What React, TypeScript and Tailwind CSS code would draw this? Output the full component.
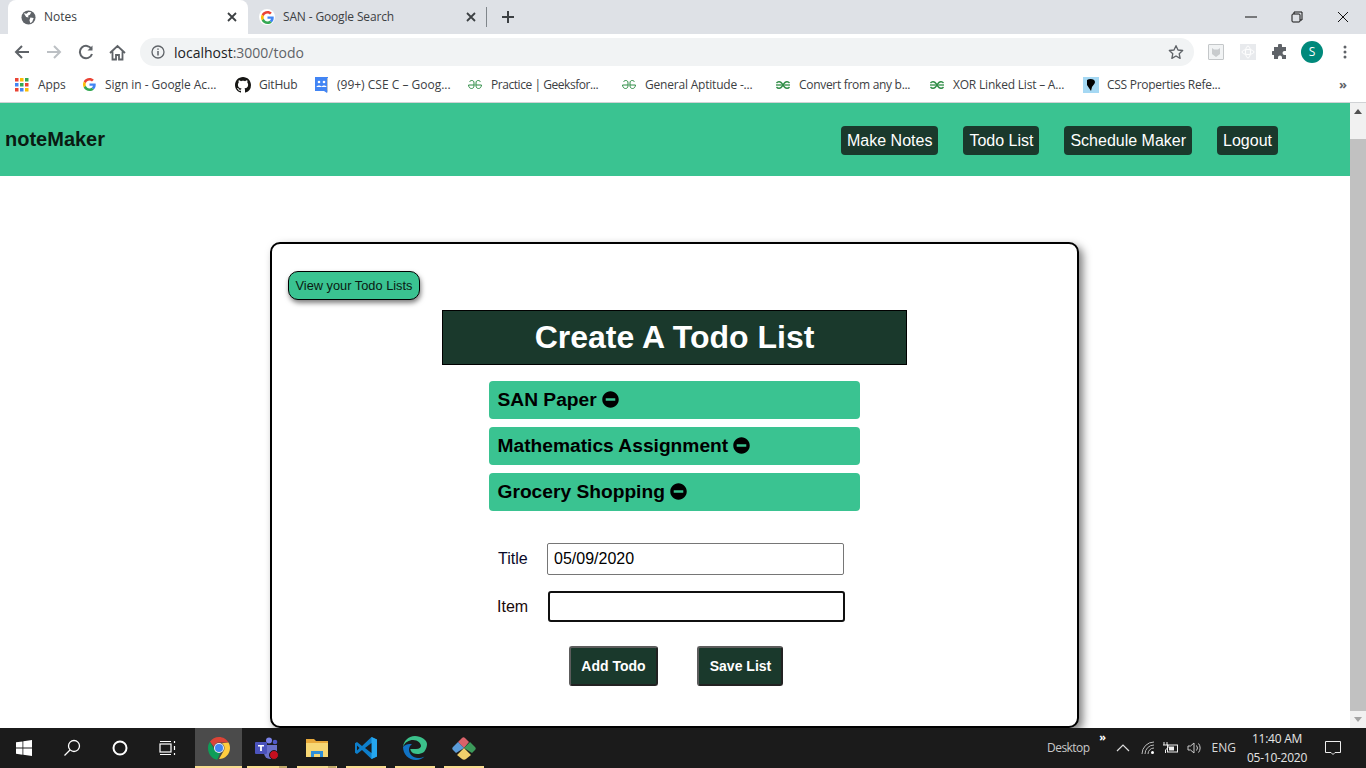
import React from "react";

const ui = "font-['Open_Sans','Noto_Sans',sans-serif]";

function GoogleG({ s = 14 }: { s?: number }) {
  return (
    <svg width={s} height={s} viewBox="0 0 48 48" className="shrink-0">
      <path fill="#EA4335" d="M24 9.500c3.500 0 6.700 1.300 9.100 3.400l6.800-6.800C35.800 2.400 30.200 0 24 0 14.600 0 6.500 5.400 2.600 13.200l7.900 6.100C12.400 13.600 17.700 9.500 24 9.500z" />
      <path fill="#4285F4" d="M47 24.500c0-1.600-.2-3.200-.4-4.500H24v9h12.900c-.6 3-2.300 5.500-4.800 7.200l7.700 6C44.300 38 47 31.800 47 24.500z" />
      <path fill="#FBBC05" d="M10.500 28.700c-.5-1.400-.8-3-.8-4.700s.3-3.300.8-4.700l-7.900-6.100C.9 16.500 0 20.100 0 24s.9 7.500 2.600 10.800z" />
      <path fill="#34A853" d="M24 48c6.500 0 11.900-2.100 15.800-5.800l-7.700-6c-2.100 1.400-4.900 2.300-8.100 2.300-6.300 0-11.600-4.200-13.500-9.800l-7.900 6.100C6.500 42.600 14.600 48 24 48z" />
    </svg>
  );
}

function Globe() {
  return (
    <svg width="15" height="15" viewBox="0 0 16 16" className="shrink-0">
      <circle cx="8" cy="8" r="7.500" fill="#5f6368" />
      <path fill="#fff" d="M3 3.500l3 .5 2-2 3 .5-1.500 2.500-2 1 .5 2-2.500-.5zM10 8l3.500.5-1.500 4-2 1.500-1-3z" />
    </svg>
  );
}

function Close({ c = "#3c4043" }: { c?: string }) {
  return (
    <svg width="10" height="10" viewBox="0 0 10 10" className="shrink-0">
      <path d="M1 1l8 8M9 1l-8 8" stroke={c} strokeWidth="1.800" />
    </svg>
  );
}

function GG({ c = "#2f8d46" }: { c?: string }) {
  return (
    <svg width="16" height="16" viewBox="0 0 16 16" className="shrink-0" fill="none" stroke={c} strokeWidth="1">
      <path d="M7.500 8H1.500c.3 2.500 1.500 3.500 3 3.500S7 10.500 7 8.500V6C7 4 6 3.500 4.800 3.500 3.700 3.500 3 4 2.500 5" />
      <path d="M8.500 8h6c-.3 2.500-1.500 3.500-3 3.500S9 10.500 9 8.500V6c0-2 1-2.500 2.200-2.500 1.100 0 1.800.5 2.300 1.500" />
    </svg>
  );
}

function GG2() {
  return (
    <svg width="16" height="16" viewBox="0 0 16 16" className="shrink-0" fill="none" stroke="#2f8d46" strokeWidth="1.300">
      <path d="M1.500 6c1.500-2 4-1.500 5.500.5l2 3c1.500 2 4 2.500 5.500.5" />
      <path d="M1.500 10c1.500 2 4 1.500 5.500-.5l2-3c1.500-2 4-2.500 5.500-.5" />
      <path d="M1 8h14" />
    </svg>
  );
}

function Bookmark({ w, icon, label, box = "w-4", gap = "gap-2", track = "" }: { w: number; icon: React.ReactNode; label: string; box?: string; gap?: string; track?: string }) {
  return (
    <div className={`flex items-center shrink-0 ${gap}`} style={{ width: w }}>
      <span className={`flex justify-center shrink-0 ${box}`}>{icon}</span>
      <span className={`text-[12px] text-[#3c4043] whitespace-nowrap ${track}`}>{label}</span>
    </div>
  );
}

function ChromeBar() {
  return (
    <div className={`shrink-0 bg-white ${ui}`}>
      {/* tab strip */}
      <div className="h-[34px] bg-[#dee1e6] flex items-end">
        <div className="w-2 shrink-0" />
        <div className="w-[240px] h-[34px] bg-white rounded-t-lg flex items-center pl-[13px] pr-[11px] gap-2 shrink-0">
          <Globe />
          <span className="text-[12px] text-[#3c4043] flex-1">Notes</span>
          <Close />
        </div>
        <div className="w-[240px] h-[34px] flex items-center pl-[11px] shrink-0">
          <span className="w-4 h-4 bg-white rounded-full flex items-center justify-center shrink-0"><GoogleG s={13} /></span>
          <span className="text-[12px] text-[#3c4043] flex-1 ml-2 tracking-[-0.15px]">SAN - Google Search</span>
          <Close />
          <span className="w-px h-5 bg-[#80868b] ml-[10px] mr-[1px]" />
        </div>
        <div className="h-[34px] flex items-center ml-[13px]">
          <svg width="14" height="14" viewBox="0 0 14 14"><path d="M7 1v12M1 7h12" stroke="#3c4043" strokeWidth="2" /></svg>
        </div>
        <div className="flex-1" />
        <div className="h-[34px] flex items-center pr-[17px] gap-[34px]">
          <svg width="12" height="12" viewBox="0 0 12 12"><path d="M0 6h12" stroke="#111" strokeWidth="1" /></svg>
          <svg width="12" height="12" viewBox="0 0 12 12" fill="none" stroke="#111"><path d="M3 3V1h8v8H9" /><rect x="1" y="3" width="8" height="8" rx="1" /></svg>
          <svg width="12" height="12" viewBox="0 0 12 12"><path d="M1 1l10 10M11 1L1 11" stroke="#111" strokeWidth="1" /></svg>
        </div>
      </div>
      {/* toolbar */}
      <div className="h-[36px] flex items-center">
        <div className="w-[140px] flex items-center pl-[14px] shrink-0">
          <svg width="16" height="16" viewBox="0 0 16 16" fill="none" stroke="#5f6368" strokeWidth="2"><path d="M15 8H2M8 2L2 8l6 6" /></svg>
          <svg width="16" height="16" viewBox="0 0 16 16" fill="none" stroke="#bcc0c4" strokeWidth="2" className="ml-4"><path d="M1 8h13M8 2l6 6-6 6" /></svg>
          <svg width="16" height="16" viewBox="0 0 16 16" fill="none" stroke="#5f6368" strokeWidth="2" className="ml-4"><path d="M13.500 5A6.200 6.200 0 1 0 14 10" /><path d="M14.500 1.500v5h-5z" fill="#5f6368" stroke="none" /></svg>
          <svg width="17" height="17" viewBox="0 0 17 17" fill="none" stroke="#5f6368" strokeWidth="1.800" className="ml-[15px]"><path d="M1 9l7.500-7L16 9M3.500 7.500V15.500h3.500V11h3v4.500h3.500V7.500" /></svg>
        </div>
        <div className="w-[1054px] h-[28px] bg-[#f1f3f4] rounded-full flex items-center pl-[11px] pr-[10px] shrink-0">
          <svg width="14" height="14" viewBox="0 0 14 14" fill="none" stroke="#5f6368" strokeWidth="1.300"><circle cx="7" cy="7" r="6" /><path d="M7 6v4.500M7 3.500v1.300" strokeWidth="1.500" /></svg>
          <span className="text-[14px] ml-[9px] text-[#5f6368] flex-1"><span className="text-[#202124]">localhost</span>:3000/todo</span>
          <svg width="16" height="16" viewBox="0 0 24 24" fill="none" stroke="#5f6368" strokeWidth="2" strokeLinejoin="round"><path d="M12 2.500l3 6.500 7 .8-5.200 4.800 1.400 7L12 18l-6.200 3.600 1.400-7L2 9.800 9 9z" /></svg>
        </div>
        <div className="flex items-center pl-[14px]">
          <div className="w-4 h-4 border border-[#c4c7c9] bg-[#f1f3f4] rounded-[1px] flex items-center justify-center">
            <svg width="8" height="9" viewBox="0 0 8 9"><path d="M0 0l2 1.500h4L8 0v6L4 9 0 6z" fill="#c8cbcd" /></svg>
          </div>
          <div className="w-4 h-4 bg-[#e8eaed] ml-4 flex items-center justify-center">
            <svg width="14" height="14" viewBox="0 0 14 14" fill="none" stroke="#fff"><ellipse cx="7" cy="7" rx="6" ry="2.500" /><ellipse cx="7" cy="7" rx="2.500" ry="6" /></svg>
          </div>
          <svg width="16" height="16" viewBox="0 0 16 16" fill="#5f6368" className="ml-4"><path d="M6 1.500a2 2 0 0 1 4 0V3h4v4h-1.500a2 2 0 0 0 0 4H14v4h-4v-1.500a2 2 0 0 0-4 0V15H2v-4H.9a2 2 0 0 1 0-4H2V3h4z" /></svg>
          <div className="w-[22px] h-[22px] rounded-full bg-[#00897b] text-white text-[12px] flex items-center justify-center ml-[13px]">S</div>
          <svg width="4" height="14" viewBox="0 0 4 14" fill="#5f6368" className="ml-[20px]"><circle cx="2" cy="2" r="1.500" /><circle cx="2" cy="7" r="1.500" /><circle cx="2" cy="12" r="1.500" /></svg>
        </div>
      </div>
      {/* bookmarks */}
      <div className="h-[33px] flex items-center pl-[14px] pb-[3px] border-b border-[#d0d2d5]">
        <Bookmark
          w={69}
          label="Apps"
          track="tracking-[-0.1px]"
          icon={
            <svg width="14" height="14" viewBox="0 0 14 14">
              {[0, 5, 10].map((x, i) =>
                [0, 5, 10].map((y, j) => (
                  <rect key={`${i}${j}`} x={x} y={y} width="3.500" height="3.500" fill={["#ea4335", "#4285f4", "#ea4335", "#fbbc05", "#34a853", "#4285f4", "#34a853", "#ea4335", "#fbbc05"][i * 3 + j]} />
                ))
              )}
            </svg>
          }
        />
        <Bookmark w={152} box="w-[13px]" gap="gap-[9px]" track="tracking-[-0.05px]" label="Sign in - Google Ac..." icon={<GoogleG s={13} />} />
        <Bookmark
          w={80}
          label="GitHub"
          track="tracking-[-0.2px]"
          icon={
            <svg width="16" height="16" viewBox="0 0 16 16" fill="#161614"><path d="M8 0C3.580 0 0 3.580 0 8c0 3.540 2.290 6.530 5.470 7.590.4.070.55-.17.55-.38 0-.19-.01-.82-.01-1.490-2.010.37-2.530-.49-2.690-.94-.09-.23-.48-.94-.82-1.130-.28-.15-.68-.52-.01-.53.63-.01 1.080.58 1.230.82.72 1.210 1.870.87 2.330.66.070-.52.28-.87.51-1.070-1.780-.2-3.640-.89-3.640-3.950 0-.87.31-1.590.82-2.150-.08-.2-.36-1.020.08-2.120 0 0 .67-.21 2.200.82.64-.18 1.320-.27 2-.27s1.360.09 2 .27c1.530-1.040 2.200-.82 2.200-.82.44 1.100.16 1.920.08 2.120.51.56.82 1.270.82 2.150 0 3.070-1.870 3.750-3.650 3.950.29.250.54.730.54 1.480 0 1.070-.01 1.930-.01 2.200 0 .21.15.46.55.38A8.010 8.010 0 0 0 16 8c0-4.420-3.580-8-8-8z" /></svg>
          }
        />
        <Bookmark
          w={152}
          box="w-[13px]"
          gap="gap-[9px]"
          label="(99+) CSE C – Goog..."
          icon={
            <svg width="13" height="16" viewBox="0 0 13 16"><path d="M0 0h13v13l-1 3-3-2H0z" fill="#4285f4" /><path d="M12 1h1v12l-1 3z" fill="#c3c7cb" /><circle cx="4" cy="5" r="1.300" fill="#fff" /><circle cx="9" cy="5" r="1.300" fill="#fff" /><path d="M1.500 10c0-2 5-2 5 0zM6.500 10c0-2 5-2 5 0z" fill="#fff" /></svg>
          }
        />
        <Bookmark w={154} track="tracking-[-0.45px]" label="Practice | Geeksfor..." icon={<GG />} />
        <Bookmark w={154} track="tracking-[-0.2px]" label="General Aptitude -..." icon={<GG />} />
        <Bookmark w={154} track="tracking-[-0.3px]" label="Convert from any b..." icon={<GG2 />} />
        <Bookmark w={154} track="tracking-[-0.2px]" label="XOR Linked List – A..." icon={<GG2 />} />
        <Bookmark
          w={256}
          track="tracking-[-0.28px]"
          label="CSS Properties Refe..."
          icon={
            <svg width="16" height="16" viewBox="0 0 16 16"><rect width="16" height="16" fill="#a5d8f3" /><path d="M4 3c3-2 8-1 8 2 0 2-2 3-3 5l-1 4-2-3-2-3z" fill="#000" /></svg>
          }
        />
        <span className="text-[13px] text-[#5f6368] font-bold">»</span>
      </div>
    </div>
  );
}

function MinusCircle() {
  return (
    <svg width="17" height="17" viewBox="0 0 512 512" className="shrink-0 -mt-[1px]"><path fill="#000" d="M256 8C119 8 8 119 8 256s111 248 248 248 248-111 248-248S393 8 256 8zM124 296c-6.600 0-12-5.400-12-12v-56c0-6.600 5.400-12 12-12h264c6.600 0 12 5.400 12 12v56c0 6.600-5.400 12-12 12H124z" /></svg>
  );
}

function NavBtn({ children, ml }: { children: React.ReactNode; ml: number }) {
  return (
    <div className="h-[29px] px-[6px] bg-[#1a392c] text-white rounded-[4px] text-[16px] flex items-center" style={{ marginLeft: ml }}>
      {children}
    </div>
  );
}

function TodoRow({ label }: { label: string }) {
  return (
    <div className="w-[371px] h-[38px] bg-[#3ac391] rounded-[4px] flex items-center gap-[5px] pl-[9px] text-[19.2px] font-bold text-black">
      <span>{label}</span>
      <MinusCircle />
    </div>
  );
}

function Page() {
  return (
    <div className="flex-1 flex min-h-0 overflow-hidden font-['Liberation_Sans',Arial,sans-serif]">
      <div className="flex-1 min-w-0 flex flex-col bg-white">
        <div className="h-[73px] shrink-0 bg-[#3ac391] flex items-center pl-[5px] pr-[72px]">
          <span className="text-[20px] font-bold text-[#0a1a12] -mt-[2px]">noteMaker</span>
          <div className="flex-1" />
          <div className="flex items-center mt-[2px]">
            <NavBtn ml={0}>Make Notes</NavBtn>
            <NavBtn ml={25}>Todo List</NavBtn>
            <NavBtn ml={25}>Schedule Maker</NavBtn>
            <NavBtn ml={25}>Logout</NavBtn>
          </div>
        </div>
        <div className="flex-1 pt-[66px]">
          <div className="w-[809px] h-[486px] ml-[270px] border-2 border-black rounded-[10px] bg-white shadow-[4px_4px_8px_rgba(0,0,0,0.5)] flex flex-col items-center pt-[27px]">
            <div className="self-start ml-[16px] h-[29px] w-[132px] bg-[#3ac391] border border-black rounded-[10px] shadow-[1px_3px_5px_rgba(0,0,0,0.5)] text-[12.8px] text-[#0a1a12] flex items-center justify-center">
              View your Todo Lists
            </div>
            <div className="w-[465px] h-[55px] mt-[10px] -ml-[1px] bg-[#1a392c] border border-black text-white text-[32px] font-bold flex items-center justify-center pb-[2px] pl-[1px]">
              Create A Todo List
            </div>
            <div className="flex flex-col gap-[8px] mt-[16px] -ml-[1px]">
              <TodoRow label="SAN Paper" />
              <TodoRow label="Mathematics Assignment" />
              <TodoRow label="Grocery Shopping" />
            </div>
            <div className="flex items-center mt-[32px] w-[370px] -ml-[1px] text-[16px]">
              <span className="w-[58px] pl-[9px] text-[#0a0a2a]">Title</span>
              <div className="w-[297px] h-[32px] border border-[#767676] rounded-[2px] pl-[6px] flex items-center text-black">05/09/2020</div>
            </div>
            <div className="flex items-center mt-[16px] w-[370px] -ml-[1px] text-[16px]">
              <span className="w-[59px] pl-[8px] text-[#1a0a0a]">Item</span>
              <div className="w-[297px] h-[31px] border-2 border-[#101010] rounded-[3px]" />
            </div>
            <div className="flex mt-[24px] ml-[2px] gap-[39px]">
              <div className="w-[89px] h-[40px] bg-[#1a392c] border-2 border-[#5c5c5c] border-r-[#222] border-b-[#222] rounded-[3px] text-white font-bold text-[14px] flex items-center justify-center pl-[1px]">Add Todo</div>
              <div className="w-[86px] h-[40px] bg-[#1a392c] border-2 border-[#5c5c5c] border-r-[#222] border-b-[#222] rounded-[3px] text-white font-bold text-[14px] flex items-center justify-center pl-[2px]">Save List</div>
            </div>
          </div>
        </div>
      </div>
      <div className="w-4 shrink-0 bg-[#f1f1f1] flex flex-col items-center">
        <div className="h-[17px] flex items-center justify-center">
          <svg width="8" height="5" viewBox="0 0 8 5"><path d="M4 0l4 5H0z" fill="#505050" /></svg>
        </div>
        <div className="w-full h-[19px]" />
        <div className="w-full flex-1 bg-[#c1c1c1]" />
        <div className="h-[17px] flex items-center justify-center">
          <svg width="8" height="5" viewBox="0 0 8 5"><path d="M4 5l4-5H0z" fill="#a3a3a3" /></svg>
        </div>
      </div>
    </div>
  );
}

function Slot({ w, active, underline = true, split, children }: { w: number; active?: boolean; underline?: boolean; split?: boolean; children: React.ReactNode }) {
  return (
    <div className={`relative h-[40px] flex items-center justify-center shrink-0 ${active ? "bg-[#4b4b4b]" : ""}`} style={{ width: w }}>
      {children}
      {underline && (
        <span className="absolute bottom-0 inset-x-0 mx-auto h-[2px] bg-[#f7dc8f]" style={{ width: active ? w : 40 }} />
      )}
      {split && <span className="absolute bottom-0 right-[5px] w-[8px] h-[2px] bg-[#c2ab6c]" />}
    </div>
  );
}

function Taskbar() {
  return (
    <div className="h-[40px] shrink-0 bg-[#1b1b1b] flex items-center text-white font-['Open_Sans','Noto_Sans',sans-serif]">
      <Slot w={48} underline={false}>
        <svg width="16" height="16" viewBox="0 0 16 16" fill="#fff"><path d="M0 2.300l6.500-.9v6.200H0zM7.300 1.300L16 0v7.600H7.300zM0 8.400h6.500v6.300L0 13.800zM7.300 8.400H16V16l-8.700-1.200z" /></svg>
      </Slot>
      <Slot w={48} underline={false}>
        <svg width="18" height="18" viewBox="0 0 18 18" fill="none" stroke="#fff" strokeWidth="1.300"><circle cx="11" cy="7" r="5.500" /><path d="M7 11l-5.500 5.500" /></svg>
      </Slot>
      <Slot w={48} underline={false}>
        <svg width="16" height="16" viewBox="0 0 16 16" fill="none" stroke="#fff" strokeWidth="2"><circle cx="8" cy="8" r="6.500" /></svg>
      </Slot>
      <Slot w={48} underline={false}>
        <svg width="18" height="16" viewBox="0 0 18 16" fill="none" stroke="#fff" strokeWidth="1.200"><rect x="1" y="4" width="11" height="8" /><path d="M1 1.500h11M1 14.500h11M15.500 1v2M15.500 6v4M15.500 13v2" /></svg>
      </Slot>
      <div className="w-[3px] shrink-0" />
      <Slot w={47} active>
        <svg width="24" height="24" viewBox="0 0 48 48">
          <path fill="#db4437" d="M24 2c8.100 0 15.200 4.400 19 11H24c-5 0-9.200 3.400-10.500 8L5.900 11.700C9.900 5.800 16.500 2 24 2z" />
          <path fill="#0f9d58" d="M5.900 11.700L15.300 28c1.800 3 5 5 8.700 5 1 0 2-.2 3-.4l-6.500 15.100C9.800 46 2 36 2 24c0-4.600 1.400-8.800 3.900-12.300z" />
          <path fill="#ffcd40" d="M43 13c1.900 3.200 3 7 3 11 0 12.200-9.800 22-22 22l9.200-15.900c1.100-1.700 1.800-3.800 1.800-6.100 0-4.100-2.300-7.700-5.700-9.400z" />
          <circle cx="24" cy="24" r="10" fill="#f1f1f1" />
          <circle cx="24" cy="24" r="8" fill="#4285f4" />
        </svg>
      </Slot>
      <Slot w={50} split>
        <svg width="26" height="24" viewBox="0 0 26 24">
          <circle cx="15" cy="4.500" r="3" fill="#7b83eb" />
          <circle cx="21" cy="6" r="2.300" fill="#5059c9" />
          <path d="M10 9h13v8a6 6 0 0 1-6 6h-1a6 6 0 0 1-6-6z" fill="#6a71c9" />
          <rect x="1" y="6" width="12" height="12" rx="1" fill="#4b53bc" />
          <path d="M4 9h6v1.600H7.900V15H6.100v-4.400H4z" fill="#fff" />
          <circle cx="20" cy="19" r="4.500" fill="#c50f1f" stroke="#1b1b1b" />
        </svg>
      </Slot>
      <Slot w={49} split>
        <svg width="22" height="20" viewBox="0 0 22 20">
          <path d="M0 1h8l2 2h12v15H0z" fill="#e8a93a" />
          <path d="M0 5h22v14H0z" fill="#f7d774" />
          <path d="M5 19v-6h12v6h-3v-3H8v3z" fill="#2f8fd8" />
        </svg>
      </Slot>
      <Slot w={49}>
        <svg width="24" height="24" viewBox="0 0 24 24">
          <path d="M17.500 1L23 3.500v17L17.500 23 8 14l-5 4-2-1.200V7.200L3 6l5 4z" fill="#0e7fcb" />
          <path d="M17.500 1L23 3.500v17L17.500 23z" fill="#25a6ee" />
          <path d="M17.500 7L11 12l6.500 5z" fill="#1b1b1b" />
          <path d="M3 9.500L5.500 12 3 14.500z" fill="#1b1b1b" />
        </svg>
      </Slot>
      <Slot w={49}>
        <svg width="24" height="24" viewBox="0 0 24 24">
          <path d="M12 0C5 0 .5 5.500 0 11c2-5 6-7 10-7 5 0 8 3.500 8 6 0 1.500-1.500 3-5 3H8c-.5 0-1 0-.5 1 1 3 4 4 7 4 2 0 4-.5 6.500-2 2-3 3-5 3-8C24 4 18 0 12 0z" fill="#3bc18b" />
          <path d="M0 11c0 7 5.500 13 13 13 3.500 0 6.500-1.500 8.500-3.500-2 1-4.500 1.500-6.500 1.500-5 0-9-4-9-8.500 0-2 1-4 3-5.500C5 8 2 8.500 0 11z" fill="#1173c4" />
        </svg>
      </Slot>
      <Slot w={49}>
        <svg width="24" height="24" viewBox="0 0 24 24">
          <path d="M12 12L6 6l4-4c1-1 2-1 3 0l4 4z" fill="#d9626a" />
          <path d="M12 12L6 6l-5 5c-1 1-1 2 0 3l3 3z" fill="#5b9bd8" />
          <path d="M12 12l6-6 5 5c1 1 1 2 0 3l-3 3z" fill="#3c9a5b" />
          <path d="M12 12l-7 7 5 4c1 1 3 1 4 0l5-4z" fill="#efcf6b" />
        </svg>
      </Slot>
      <div className="flex-1" />
      <div className="relative text-[12px] tracking-[-0.55px] text-[#c9c9c9] mr-[26px]">
        Desktop
        <span className="absolute -top-[8px] -right-[16px] text-[11px] font-bold leading-none text-white">»</span>
      </div>
      <svg width="14" height="8" viewBox="0 0 14 8" fill="none" stroke="#ddd" strokeWidth="1.200" className="mr-[11px]"><path d="M1 7l6-6 6 6" /></svg>
      <svg width="14" height="14" viewBox="0 0 14 14" fill="none" stroke="#bbb" className="mr-[8px]"><path d="M1 13a12 12 0 0 1 12-12M4 13a9 9 0 0 1 9-9M7 13a6 6 0 0 1 6-6" /><circle cx="11.500" cy="11.500" r="1.500" fill="#fff" stroke="none" /></svg>
      <svg width="16" height="12" viewBox="0 0 16 12" fill="none" stroke="#eee" className="mr-[8px]"><path d="M1 0v3M4 0v3M0 3h5v2.500L2.500 8v3" /><rect x="4.500" y="3" width="10" height="7" /><rect x="6" y="4.500" width="5" height="4" fill="#eee" stroke="none" /></svg>
      <svg width="16" height="14" viewBox="0 0 16 14" fill="none" stroke="#ccc" className="mr-[9px]"><path d="M1 5h2.500L7 2v10L3.500 9H1zM9.500 4.500a4 4 0 0 1 0 5M11.500 2.500a7 7 0 0 1 0 9" /></svg>
      <span className="text-[12px] text-[#d9d9d9] mr-[9px]">ENG</span>
      <div className="text-[12px] text-[#e5e5e5] leading-[19px] text-center w-[64px] mr-[16px] whitespace-nowrap tracking-[-0.25px]">
        <div>11:40 AM</div>
        <div>05-10-2020</div>
      </div>
      <svg width="16" height="16" viewBox="0 0 16 16" fill="none" stroke="#eee" className="mr-[25px]"><path d="M.5 1.500h15v11H10l-2 2-2-2H.5z" /></svg>
    </div>
  );
}

export default function App() {
  return (
    <div className="w-[1366px] h-[768px] overflow-hidden flex flex-col bg-white">
      <ChromeBar />
      <Page />
      <Taskbar />
    </div>
  );
}
